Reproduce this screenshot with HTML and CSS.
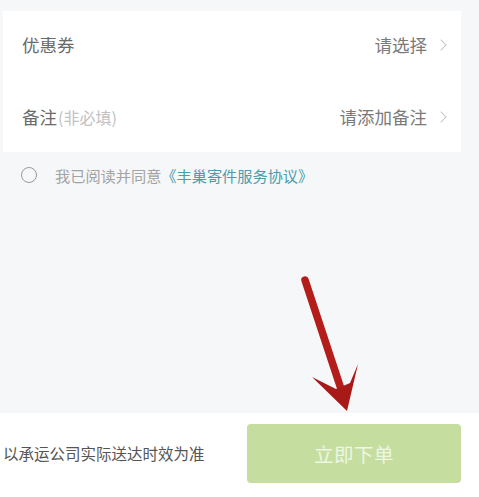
FILE: index.html
```html
<!DOCTYPE html>
<html lang="zh-CN">
<head>
<meta charset="utf-8">
<link rel="stylesheet" href="styles.css">
</head>
<body>
<div class="page">
  <div class="card">
    <div class="row first">
      <span class="label">优惠券</span>
      <span class="value">请选择<span class="chev"></span></span>
    </div>
    <div class="row">
      <span class="label">备注<span class="hint">(非必填)</span></span>
      <span class="value">请添加备注<span class="chev"></span></span>
    </div>
  </div>
  <div class="agree">
    <span class="radio"></span>
    <span class="agree-text">我已阅读并同意<span class="link">《丰巢寄件服务协议》</span></span>
  </div>
  <div class="spacer"></div>
  <div class="bottom">
    <span class="note">以承运公司实际送达时效为准</span>
    <div class="btn">立即下单</div>
  </div>
  <svg class="arrow" width="479" height="497" viewBox="0 0 479 497">
    <line x1="305" y1="280" x2="342" y2="392" stroke="#b31d1a" stroke-width="7.5" stroke-linecap="round"/>
    <polygon points="312,377 336,389 350,383 358,364 347,411" fill="#a81a17"/>
  </svg>
</div>
</body>
</html>
```
FILE: styles.css
```css
* { box-sizing: border-box; }
html, body { margin: 0; padding: 0; }
body {
  background: #f5f7f8;
  font-family: "Noto Sans CJK SC", "Noto Sans", sans-serif;
  width: 479px;
  height: 497px;
  overflow: hidden;
}
.page {
  position: relative;
  height: 497px;
  display: flex;
  flex-direction: column;
}
.card {
  margin: 11px 18px 0 3px;
  background: #ffffff;
  display: flex;
  flex-direction: column;
}
.row {
  height: 70.5px;
  display: flex;
  align-items: center;
  justify-content: space-between;
  padding: 0 14px 0 19px;
}
.row.first {
  padding-bottom: 3px;
}
.label {
  font-size: 17.5px;
  color: #6a6a6a;
}
.hint {
  font-size: 16px;
  color: #c2c2c2;
  margin-left: 1px;
}
.value {
  font-size: 17.5px;
  color: #7a7a7a;
  display: flex;
  align-items: center;
}
.chev {
  width: 8px;
  height: 8px;
  border-top: 1px solid #c9c9c9;
  border-right: 1px solid #c9c9c9;
  transform: rotate(45deg);
  margin-left: 10px;
  margin-right: 2px;
}
.agree {
  height: 48px;
  display: flex;
  align-items: center;
  padding-left: 21px;
  padding-bottom: 2px;
}
.radio {
  width: 16px;
  height: 16px;
  border: 1.5px solid #9a9a9a;
  border-radius: 50%;
}
.agree-text {
  margin-left: 18px;
  font-size: 15.2px;
  color: #a3a3a3;
}
.link {
  color: #4a9cae;
}
.spacer { flex: 1; }
.bottom {
  height: 84px;
  background: #ffffff;
  display: flex;
  align-items: flex-start;
  justify-content: space-between;
  padding: 11px 18px 0 3px;
}
.note {
  font-size: 15.5px;
  color: #555555;
  line-height: 59px;
}
.btn {
  width: 214px;
  height: 59px;
  border-radius: 4px;
  background: #c5de9f;
  color: #eef6e4;
  font-size: 19.5px;
  display: flex;
  align-items: center;
  justify-content: center;
  letter-spacing: 0.5px;
}
.arrow {
  position: absolute;
  left: 0;
  top: 0;
  pointer-events: none;
}
```
